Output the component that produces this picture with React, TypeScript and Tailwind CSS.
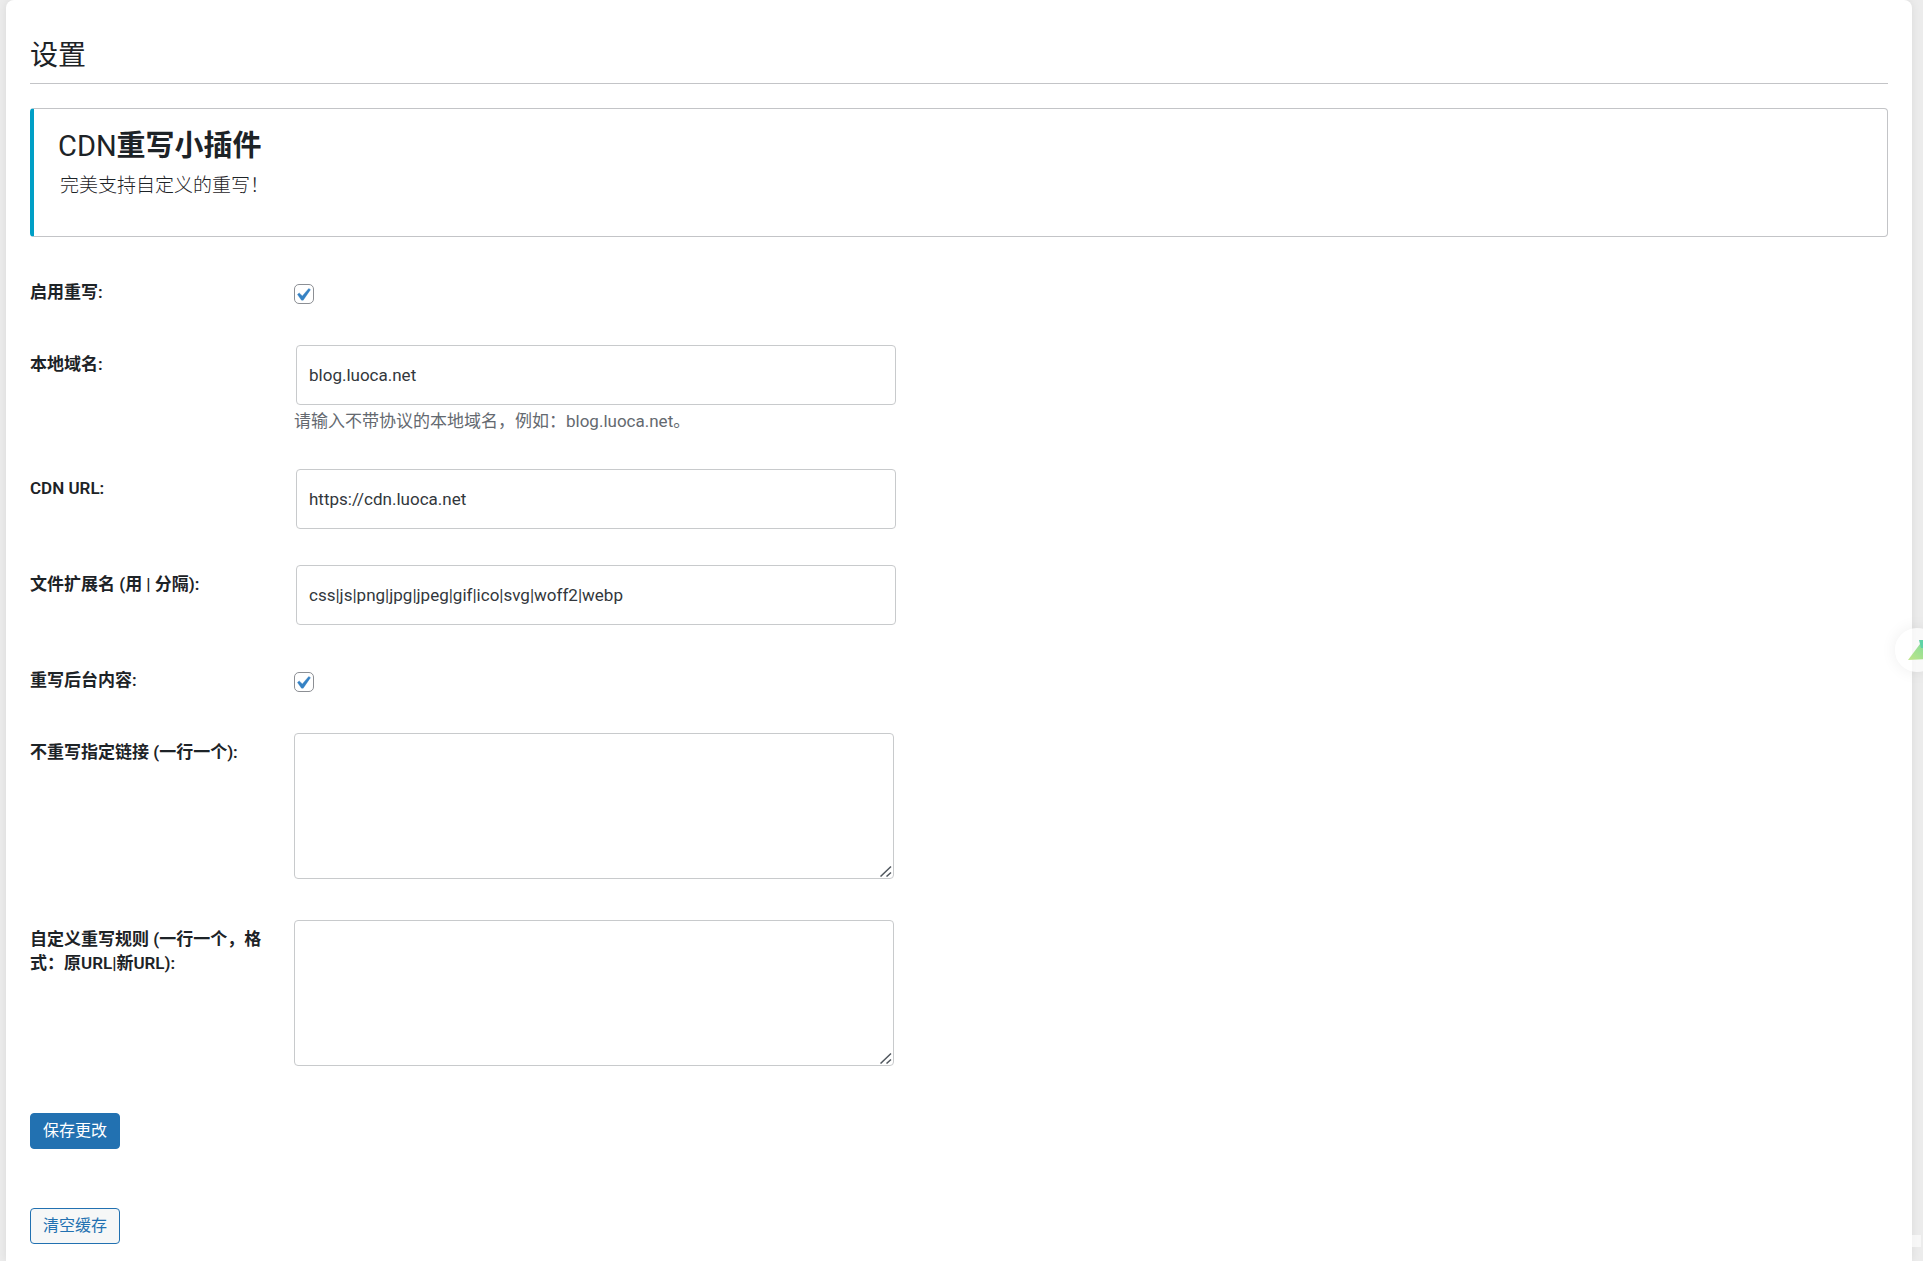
import React, { useState } from 'react';

type RowProps = {
  id: string;
  label: string;
  children: React.ReactNode;
};

const Row: React.FC<RowProps> = ({ id, label, children }) => (
  <div className="flex items-start">
    <label htmlFor={id} className="w-[264px] shrink-0 pt-3 pr-6 text-[17px] leading-6 font-semibold text-[#1d2327]">
      {label}
    </label>
    <div className="min-w-0 flex-1">{children}</div>
  </div>
);

const CheckField: React.FC<{ id: string }> = ({ id }) => {
  const [checked, setChecked] = useState(true);

  return (
    <div className="flex pt-4 pb-9">
      <span className="relative block h-5 w-5">
        <input
          id={id}
          type="checkbox"
          checked={checked}
          onChange={(e) => setChecked(e.target.checked)}
          className="block h-5 w-5 appearance-none rounded-[5px] border border-[#8c8f94] bg-white"
        />
        {checked && (
          <svg viewBox="3 1.3 16 16" className="pointer-events-none absolute inset-0 h-5 w-5">
            <path
              d="M14.83 4.89l1.34.94-5.81 8.38H9.02L5.78 9.67l1.34-1.25 2.57 2.4z"
              fill="#3582c4"
              stroke="#3582c4"
              strokeWidth="0.3"
            />
          </svg>
        )}
      </span>
    </div>
  );
};

const TextField: React.FC<{ id: string; value: string; hint?: string }> = ({ id, value, hint }) => (
  <div className="pt-[5px] pb-[31px]">
    <div className="pl-[2px]">
      <input
        id={id}
        type="text"
        defaultValue={value}
        className="block h-[60px] w-full max-w-[600px] rounded-[4px] border border-[#c8cacc] bg-white px-3 text-[17px] text-[#32373c]"
      />
    </div>
    {hint && <p className="mt-1 text-[17px] leading-6 text-[#646970]">{hint}</p>}
  </div>
);

const AreaField: React.FC<{ id: string }> = ({ id }) => (
  <div className="pt-[5px] pb-9">
    <div className="relative max-w-[600px]">
      <textarea
        id={id}
        className="block h-[146px] w-full resize-y rounded-[4px] border border-[#c8cacc] bg-white px-3 py-2 text-[17px] text-[#32373c] [&::-webkit-resizer]:bg-transparent"
      />
      <svg viewBox="0 0 12 12" className="pointer-events-none absolute right-[2px] bottom-[2px] h-3 w-3">
        <path d="M0.5 11.5L11 1.5M6.5 11.5L11 7.5" fill="none" stroke="#50575e" strokeWidth="1.5" />
      </svg>
    </div>
  </div>
);

const App: React.FC = () => {
  return (
    <div className="relative min-h-screen overflow-hidden bg-[#ececec] pr-[11px] pl-[6px] font-['Roboto','Noto_Sans_CJK_SC',sans-serif]">
      <main className="min-h-screen rounded-t-lg bg-white px-6 pt-[34px] pb-4 shadow-[0_0_10px_rgba(0,0,0,0.08)]">
        {/* Page title */}
        <h1 className="border-b border-[#c3c4c7] pb-[5px] text-[28px] leading-[44px] font-normal text-[#1d2327]">设置</h1>

        {/* Plugin banner */}
        <section className="mt-6 rounded-[4px] border border-l-4 border-[#c3c4c7] border-l-[#009fc6] px-6 pt-4 pb-[34px]">
          <h2 className="text-[29px] leading-[42px] font-bold text-[#1d2327]">
            <span className="font-normal">CDN</span>重写小插件
          </h2>
          <p className="mt-[2px] pl-[2px] text-[19px] leading-[33px] font-light text-[#1d2327]">完美支持自定义的重写！</p>
        </section>

        {/* Settings form */}
        <form className="mt-[31px]" onSubmit={(e) => e.preventDefault()}>
          <Row id="enable" label="启用重写:">
            <CheckField id="enable" />
          </Row>
          <Row id="domain" label="本地域名:">
            <TextField id="domain" value="blog.luoca.net" hint="请输入不带协议的本地域名，例如：blog.luoca.net。" />
          </Row>
          <Row id="cdn" label="CDN URL:">
            <TextField id="cdn" value="https://cdn.luoca.net" />
          </Row>
          <Row id="ext" label="文件扩展名 (用 | 分隔):">
            <TextField id="ext" value="css|js|png|jpg|jpeg|gif|ico|svg|woff2|webp" />
          </Row>
          <Row id="admin" label="重写后台内容:">
            <CheckField id="admin" />
          </Row>
          <Row id="exclude" label="不重写指定链接 (一行一个):">
            <AreaField id="exclude" />
          </Row>
          <Row id="rules" label="自定义重写规则 (一行一个，格式：原URL|新URL):">
            <AreaField id="rules" />
          </Row>

          <div className="mt-[11px] flex flex-col items-start gap-[59px]">
            <button type="submit" className="h-9 rounded-[4px] border border-[#2271b1] bg-[#2271b1] px-3 text-[16px] text-white">
              保存更改
            </button>
            <button type="button" className="h-9 rounded-[4px] border border-[#2271b1] bg-[#f6f7f7] px-3 text-[16px] text-[#2271b1]">
              清空缓存
            </button>
          </div>
        </form>
      </main>

      {/* Floating helper, half tucked behind the window edge */}
      <button
        type="button"
        aria-label="Helper"
        className="absolute top-[628px] -right-4 h-11 w-11 rounded-full bg-white/70 shadow-[0_0_16px_rgba(0,0,0,0.07)]"
      >
        <svg viewBox="0 0 44 44" className="h-11 w-11">
          <defs>
            <linearGradient id="leaf" x1="0" y1="1" x2="1" y2="0">
              <stop offset="0" stopColor="#bfe58a" />
              <stop offset="1" stopColor="#7fdc9c" />
            </linearGradient>
          </defs>
          <path d="M13 32L25 16L36 16L36 31Z" fill="url(#leaf)" />
          <path d="M24 12H36V20H26Z" fill="#5fd3a6" />
        </svg>
      </button>
      <div className="absolute right-[2px] bottom-[14px] h-3 w-[9px] bg-white/60" />
    </div>
  );
};

export default App;
